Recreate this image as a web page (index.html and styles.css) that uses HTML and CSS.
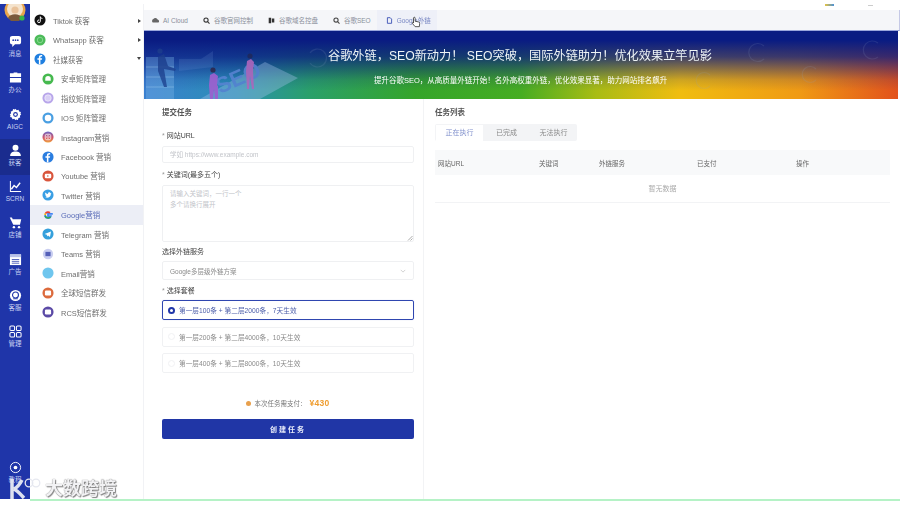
FILE: index.html
```html
<!DOCTYPE html>
<html lang="zh-CN">
<head>
<meta charset="utf-8">
<title>Google外链</title>
<link rel="stylesheet" href="styles.css">
</head>
<body>
<div class="page">
<div class="app">
  <nav class="rail">
    <div class="avatar"><svg viewBox="0 0 22 22" width="22" height="22"><circle cx="11" cy="9" r="10.500" fill="#e8a64c"/><circle cx="11" cy="8" r="8" fill="#f4e3cd"/><path d="M4 17c2-5 12-5 14 0l-3 3H7z" fill="#7a5a3c"/><circle cx="11" cy="9" r="3.600" fill="#e9c29a"/><circle cx="18" cy="17" r="2.600" fill="#39b54a"/></svg></div>
    <a class="rail-item"><svg viewBox="0 0 14 14" class="ri"><path d="M1 3.500C1 2 2 1.200 3.500 1.200h7C12 1.200 13 2 13 3.500v4.200c0 1.500-1 2.300-2.500 2.300H6.500L3.500 12.800V10C2 10 1 9.200 1 7.700z" fill="#fff"/><g fill="#2036a8"><circle cx="4.500" cy="5.600" r=".9"/><circle cx="7" cy="5.600" r=".9"/><circle cx="9.500" cy="5.600" r=".9"/></g></svg><span>消息</span></a>
    <a class="rail-item"><svg viewBox="0 0 14 14" class="ri"><path d="M5 2.500V1.500h4v1h4v4H1v-4zM1 7.500h12v5H1z" fill="#fff"/></svg><span>办公</span></a>
    <a class="rail-item"><svg viewBox="0 0 14 14" class="ri"><path d="M7 .8l1.300 1.500 2-.4.600 1.900 1.900.6-.4 2L13.200 7l-1.500 1.300.4 2-1.900.6-.6 1.900-2-.4L7 13.200l-1.300-1.500-2 .4-.6-1.900-1.900-.6.4-2L.8 7l1.500-1.300-.4-2 1.900-.6.600-1.900 2 .4z" fill="#fff"/><circle cx="7" cy="7" r="2.600" fill="#2036a8"/><circle cx="7" cy="7" r="1.300" fill="#fff"/></svg><span>AIGC</span></a>
    <a class="rail-item active"><svg viewBox="0 0 14 14" class="ri"><circle cx="7" cy="4" r="3.200" fill="#fff"/><path d="M1.200 13c0-3.500 2.500-5 5.800-5s5.800 1.500 5.800 5z" fill="#fff"/></svg><span>获客</span></a>
    <a class="rail-item"><svg viewBox="0 0 14 14" class="ri"><path d="M1.500 1v11.500H13" fill="none" stroke="#fff" stroke-width="1.100"/><path d="M2.500 10l3-4 2.500 2 4-5" fill="none" stroke="#fff" stroke-width="1.500"/></svg><span>SCRN</span></a>
    <a class="rail-item"><svg viewBox="0 0 14 14" class="ri"><path d="M.8 1.500h2.400l.8 2h9.200L11.800 9.500H4.600z" fill="#fff"/><circle cx="5.300" cy="12" r="1.300" fill="#fff"/><circle cx="10.800" cy="12" r="1.300" fill="#fff"/></svg><span>店铺</span></a>
    <a class="rail-item"><svg viewBox="0 0 14 14" class="ri"><rect x="1" y="1.500" width="12" height="11.500" fill="#fff"/><rect x="1" y="1.500" width="12" height="3" fill="#b9c2e8"/><path d="M3 7h8M3 9h8M3 11h8" stroke="#2036a8" stroke-width=".8"/></svg><span>广告</span></a>
    <a class="rail-item"><svg viewBox="0 0 14 14" class="ri"><circle cx="7" cy="7" r="6" fill="#fff"/><circle cx="7" cy="6.500" r="3.200" fill="none" stroke="#2036a8" stroke-width="1.200"/><path d="M4.500 10.500h5" stroke="#2036a8"/></svg><span>客服</span></a>
    <a class="rail-item"><svg viewBox="0 0 14 14" class="ri"><g fill="none" stroke="#fff" stroke-width="1.100"><rect x="1" y="1" width="5" height="5" rx="1.200"/><rect x="8" y="1" width="5" height="5" rx="1.200"/><rect x="1" y="8" width="5" height="5" rx="1.200"/><rect x="8" y="8" width="5" height="5" rx="1.200"/></g></svg><span>管理</span></a>
    <a class="rail-item rail-bottom"><svg viewBox="0 0 14 14" class="ri"><circle cx="7" cy="7" r="5.500" fill="none" stroke="#fff" stroke-width="1"/><circle cx="7" cy="7" r="2" fill="#fff"/></svg><span>教程</span></a>
  </nav>

  <aside class="menu">
    <a class="mi"><svg class="ic" viewBox="0 0 14 14"><circle cx="7" cy="7" r="6.500" fill="#111"/><path d="M7.400 3v5.500a1.600 1.600 0 1 1-1.400-1.600M7.400 3.200c.3 1.300 1.200 2 2.400 2.100" fill="none" stroke="#fff" stroke-width="1.100"/></svg><span>Tiktok 获客</span><i class="arrow right"></i></a>
    <a class="mi"><svg class="ic" viewBox="0 0 14 14"><circle cx="7" cy="7" r="6.500" fill="#4dbb5a"/><circle cx="7" cy="7" r="3.200" fill="none" stroke="#8fdc97" stroke-width="1"/></svg><span>Whatsapp 获客</span><i class="arrow right"></i></a>
    <a class="mi"><svg class="ic" viewBox="0 0 14 14"><circle cx="7" cy="7" r="6.500" fill="#1f7fe0"/><path d="M7.500 13V8H9.200l.3-1.900H7.500V5c0-.6.300-1 1-1h1V2.400c-2.200-.3-3.800.4-3.800 2.500v1.200H4V8h1.700v5z" fill="#fff"/></svg><span>社媒获客</span><i class="arrow down"></i></a>
    <a class="mi sub"><svg class="ic" viewBox="0 0 14 14"><circle cx="7" cy="7" r="6.500" fill="#46b94f"/><path d="M3.800 9V6.800a3.200 3.200 0 0 1 6.400 0V9z" fill="#fff"/></svg><span>安卓矩阵管理</span></a>
    <a class="mi sub"><svg class="ic" viewBox="0 0 14 14"><circle cx="7" cy="7" r="6.500" fill="#b8a6ea"/><circle cx="7" cy="7" r="3.800" fill="#d9cff5" stroke="#fff" stroke-width=".6"/></svg><span>指纹矩阵管理</span></a>
    <a class="mi sub"><svg class="ic" viewBox="0 0 14 14"><circle cx="7" cy="7" r="6.500" fill="#4a9fe2"/><circle cx="7" cy="7" r="3.800" fill="#fff"/></svg><span>IOS 矩阵管理</span></a>
    <a class="mi sub"><svg class="ic" viewBox="0 0 14 14"><defs><linearGradient id="ig" x1="0" y1="0" x2="0" y2="1"><stop offset="0" stop-color="#6a68c8"/><stop offset=".55" stop-color="#d2566a"/><stop offset="1" stop-color="#f0a23c"/></linearGradient></defs><circle cx="7" cy="7" r="6.500" fill="url(#ig)"/><rect x="3.800" y="3.800" width="6.400" height="6.400" rx="1.800" fill="none" stroke="#fff" stroke-width=".9"/><circle cx="7" cy="7" r="1.500" fill="none" stroke="#fff" stroke-width=".8"/></svg><span>Instagram营销</span></a>
    <a class="mi sub"><svg class="ic" viewBox="0 0 14 14"><circle cx="7" cy="7" r="6.500" fill="#2a7de0"/><path d="M7.500 13V8H9.200l.3-1.900H7.500V5c0-.6.300-1 1-1h1V2.400c-2.200-.3-3.800.4-3.800 2.500v1.200H4V8h1.700v5z" fill="#fff"/></svg><span>Facebook 营销</span></a>
    <a class="mi sub"><svg class="ic" viewBox="0 0 14 14"><circle cx="7" cy="7" r="6.500" fill="#d9553c"/><rect x="3.200" y="4.500" width="7.600" height="5" rx="1.400" fill="#fff"/><path d="M6.200 5.800v2.400L8.200 7z" fill="#d9553c"/></svg><span>Youtube 营销</span></a>
    <a class="mi sub"><svg class="ic" viewBox="0 0 14 14"><circle cx="7" cy="7" r="6.500" fill="#3a9fe4"/><path d="M3.400 9.800c3.500 1.500 7-.5 7-4.200l.7-.8-.9.2-.6-.7C8.400 3.300 6.800 4.200 7 5.700 5.700 5.700 4.600 5 3.800 4.200c-.4 1 0 1.900.6 2.400l-.7-.2c0 .9.500 1.500 1.300 1.800H4.300c.2.600.7 1 1.400 1-.7.500-1.500.7-2.300.6z" fill="#fff"/></svg><span>Twitter 营销</span></a>
    <a class="mi sub current"><svg class="ic" viewBox="0 0 14 14"><path d="M12.600 5.800H7v2.500h3.200A3.400 3.400 0 0 1 3.600 7" fill="none" stroke="#4285f4" stroke-width="2"/><path d="M3.700 8c.5 1.500 1.800 2.500 3.300 2.500s2.500-.6 3.200-1.600" fill="none" stroke="#34a853" stroke-width="2"/><path d="M3.600 7c0-.7.200-1.300.5-1.800" fill="none" stroke="#fbbc05" stroke-width="2"/><path d="M4.100 5.200A3.500 3.500 0 0 1 9.300 4.400" fill="none" stroke="#ea4335" stroke-width="2"/></svg><span>Google营销</span></a>
    <a class="mi sub"><svg class="ic" viewBox="0 0 14 14"><circle cx="7" cy="7" r="6.500" fill="#35a0dc"/><path d="M3 7l7.500-3-1.200 6.500-2.300-1.700-1.100 1.100-.2-2z" fill="#fff"/></svg><span>Telegram 营销</span></a>
    <a class="mi sub"><svg class="ic" viewBox="0 0 14 14"><circle cx="7" cy="7" r="6" fill="#c8cdf0"/><rect x="4" y="4.500" width="6" height="5" fill="#5560b8"/></svg><span>Teams 营销</span></a>
    <a class="mi sub"><svg class="ic" viewBox="0 0 14 14"><circle cx="7" cy="7" r="6.500" fill="#6fc6ee"/></svg><span>Email营销</span></a>
    <a class="mi sub"><svg class="ic" viewBox="0 0 14 14"><circle cx="7" cy="7" r="6.500" fill="#dc6a3c"/><rect x="3.400" y="4.200" width="7.200" height="5.600" rx="1.400" fill="#fff"/></svg><span>全球短信群发</span></a>
    <a class="mi sub"><svg class="ic" viewBox="0 0 14 14"><circle cx="7" cy="7" r="6.500" fill="#5b4aa6"/><rect x="3.400" y="4.200" width="7.200" height="5.600" rx="1.400" fill="#fff"/></svg><span>RCS短信群发</span></a>
  </aside>

  <main class="main">
    <div class="topstrip"><i class="dot-a"></i><i class="dot-b"></i></div>
    <div class="tabs">
      <a class="tab"><svg viewBox="0 0 10 10" class="ti"><path d="M1 8a3 3 0 0 1 1-5 3.500 3.500 0 0 1 6 .5A2.500 2.500 0 0 1 9 8z" fill="#666"/></svg>AI Cloud</a>
      <a class="tab"><svg viewBox="0 0 10 10" class="ti"><circle cx="4.300" cy="4.300" r="3" fill="none" stroke="#333" stroke-width="1.500"/><path d="M6.500 6.500L9.300 9.300" stroke="#333" stroke-width="1.500"/></svg>谷歌官网控制</a>
      <a class="tab"><svg viewBox="0 0 10 10" class="ti"><path d="M1 1h3.500v8H1zM5.500 2h3.500v6H5.500z" fill="#333"/></svg>谷歌域名控盘</a>
      <a class="tab"><svg viewBox="0 0 10 10" class="ti"><circle cx="4.300" cy="4.300" r="3" fill="none" stroke="#444" stroke-width="1.500"/><path d="M6.500 6.500L9.300 9.300" stroke="#444" stroke-width="1.500"/></svg>谷歌SEO</a>
      <a class="tab on"><svg viewBox="0 0 10 10" class="ti"><path d="M2 1h4l2 2v6H2z" fill="none" stroke="#2f46b0" stroke-width="1.200"/></svg>Google外链</a>
    </div>
    <section class="banner">
      <svg class="art" viewBox="0 0 754 68" width="754" height="68">
        <path d="M2 26h28v42H2z" fill="#7fb8e8" opacity=".4"/>
        <g fill="none" stroke="#bcdcf4" stroke-width=".8" opacity=".5"><path d="M2 36h28M2 46h28M2 56h28"/></g>
        <path d="M14 26l6-3 4 12 8 3-1 2-11-2 3 18h-3l-6-16z" fill="#1e3f8c" opacity=".85"/>
        <circle cx="16" cy="20" r="2.600" fill="#1e3f8c" opacity=".85"/>
        <path d="M35 28h22l12-8v16l-34 4z" fill="#8fb4ea" opacity=".16"/>
        <path d="M56 68L121 31 154 47 116 68z" fill="#a8c4ec" opacity=".42"/>
        <text x="76" y="63" class="art-seo" transform="rotate(-24 76 63)">SEO</text>
        <path d="M66 44l4-2 4 3-1 9 1 1v13h-3l-1-10-1 10h-3l-1-14z" fill="#a85ed2"/>
        <circle cx="69" cy="39" r="2.600" fill="#2e2448"/>
        <path d="M103 30l4-2 3 3-1 9 1 18h-2l-2-13-1 13h-2l-1-18z" fill="#b868c0"/>
        <circle cx="106" cy="25" r="2.600" fill="#20285a"/>
        <g fill="none" stroke="#8fa0c0" stroke-width="1.200" opacity=".18">
          <path d="M166 22a9 9 0 1 1 0 10"/>
          <path d="M620 15a9 9 0 1 0 0 13"/>
          <path d="M734 12a9 9 0 1 0 0 14"/>
          <path d="M672 38a8 8 0 1 0 0 11"/>
          <path d="M566 44a8 8 0 1 0 0 11"/>
        </g>
      </svg>
      <div class="banner-copy">
        <h1>谷歌外链，SEO新动力！ SEO突破，国际外链助力！优化效果立竿见影</h1>
        <p>提升谷歌SEO，从高质量外链开始！名外高权重外链，优化效果显著，助力网站排名飙升</p>
      </div>
    </section>
    <div class="panels">
      <form class="form">
        <h2>提交任务</h2>
        <label class="lb first"><b>*</b> 网站URL</label>
        <div class="field one ph">学如 https://www.example.com</div>
        <label class="lb kw"><b>*</b> 关键词(最多五个)</label>
        <div class="field area ph">请输入关键词，一行一个<br>多个请换行展开<svg class="grip" viewBox="0 0 6 6" width="6" height="6"><path d="M5.500 1L1 5.500M5.500 3.500L3.500 5.500" stroke="#888" stroke-width=".7"/></svg></div>
        <label class="lb svc">选择外链服务</label>
        <div class="field sel"><span>Google多层级外链方案</span><svg viewBox="0 0 8 5" width="6" height="4"><path d="M1 1l3 3 3-3" fill="none" stroke="#c4c4c4"/></svg></div>
        <label class="lb pk"><b>*</b> 选择套餐</label>
        <div class="opt picked"><i class="radio"></i>第一层100条 + 第二层2000条，7天生效</div>
        <div class="opt"><i class="radio"></i>第一层200条 + 第二层4000条，10天生效</div>
        <div class="opt"><i class="radio"></i>第一层400条 + 第二层8000条，10天生效</div>
        <div class="price"><i class="coin"></i><span>本次任务需支付：</span><strong>¥430</strong></div>
        <button class="submit" type="button">创建任务</button>
      </form>
      <section class="list">
        <h2>任务列表</h2>
        <div class="seg"><a class="on">正在执行</a><a>已完成</a><a>无法执行</a></div>
        <div class="thead"><span>网站URL</span><span>关键词</span><span>外链服务</span><span>已支付</span><span>操作</span></div>
        <div class="empty">暂无数据</div>
      </section>
    </div>
  </main>
</div>
<div class="greenline"></div>
<svg class="cursor" viewBox="0 0 12 15" width="10" height="13"><path d="M4 1.200c.8 0 1 .5 1 1.200V6l4 .8c1 .2 1.500.8 1.400 1.700L10 12.500H5L1.800 8.800c-.7-1 .5-1.800 1.300-1L3 8V2.400c0-.7.300-1.200 1-1.200z" fill="#fff" stroke="#222" stroke-width=".9"/></svg>
<div class="mark"><svg viewBox="0 0 33 22" width="33" height="22"><path d="M4 1v20M6 11c4-2 6-5 8-9M6 11c4 2 7 6 10 9" fill="none" stroke="#dde1f0" stroke-width="3.500"/><circle cx="21" cy="5" r="3.800" fill="none" stroke="#e6e8f0" stroke-width="1.300"/><circle cx="28" cy="5" r="3.800" fill="none" stroke="#e6e8f0" stroke-width="1.300"/></svg><span>大数跨境</span></div>
</div>
</body>
</html>
```
FILE: styles.css
```css
* { box-sizing: border-box; }
html, body { margin: 0; height: 506px; overflow: hidden; background: #fff; }
body { font-family: "Liberation Sans", "Noto Sans CJK SC", sans-serif; font-size: 7px; color: #666; }
a { display: block; }
h1, h2, p { margin: 0; }

.page { position: relative; width: 900px; height: 506px; padding-top: 4px; filter: blur(.5px); overflow: hidden; }
.app { display: flex; height: 495px; }

/* icon rail */
.rail { width: 30px; flex: none; background: #1f35a9; display: flex; flex-direction: column; align-items: stretch; overflow: hidden; color: #c7d0f2; }
.avatar { height: 26px; margin-top: -3px; padding-left: 4px; flex: none; box-sizing: content-box; padding-bottom: 3px; }
.rail-item { height: 36.300px; flex: none; display: flex; flex-direction: column; align-items: center; padding-top: 5px; gap: 2px; font-size: 6.500px; line-height: 8px; }
.rail-item.active { background: #1a2c8e; }
.ri { width: 13px; height: 13px; flex: none; }
.rail-bottom { margin-top: auto; height: 38px; padding-top: 0; }

/* second-level menu */
.menu { width: 114px; flex: none; padding-top: 6.500px; display: flex; flex-direction: column; font-size: 7.500px; color: #6f6f6f; border-right: 1px solid #f1f2f5; }
.mi { height: 19.470px; flex: none; display: flex; align-items: center; padding-left: 4px; gap: 7px; position: relative; }
.mi.sub { padding-left: 12px; }
.mi.current { background: #eceef6; color: #5a6cb8; }
.ic { width: 12px; height: 12px; flex: none; }
.arrow { position: absolute; right: 2px; top: 8px; width: 0; height: 0; border-style: solid; }
.arrow.right { border-width: 2px 0 2px 3px; border-color: transparent transparent transparent #444; }
.arrow.down { border-width: 3px 2px 0 2px; border-color: #444 transparent transparent transparent; }

/* main area */
.main { flex: 1; min-width: 0; display: flex; flex-direction: column; padding-right: 2px; }
.topstrip { height: 6px; flex: none; position: relative; }
.dot-a { position: absolute; left: 681px; top: 0; width: 9px; height: 2px; background: linear-gradient(90deg, #e8c440, #4a90d8); }
.dot-b { position: absolute; left: 724px; top: 1px; width: 5px; height: 1px; background: #ccc; }
.tabs { height: 21px; flex: none; margin-right: -2px; display: flex; align-items: stretch; background: #f5f6f9; padding-left: 8px; border-bottom: 1px solid #9aa6dc; border-right: 1px solid #c5c9e6; color: #8a8f9a; font-size: 6.500px; }
.tab { display: flex; align-items: center; gap: 4px; margin-right: 15px; white-space: nowrap; }
.tab.on { background: #eef0f8; color: #7a88c4; padding: 0 6px 0 9px; margin-left: -9px; }
.ti { width: 7px; height: 7px; flex: none; }

/* banner */
.banner { height: 68px; flex: none; position: relative; display: flex; justify-content: flex-start;
  background:
    linear-gradient(180deg, #0a1c82 0%, #0a1c82 14%, rgba(10,28,130,.78) 38%, rgba(10,28,130,.15) 72%, rgba(10,28,130,0) 88%),
    linear-gradient(90deg, #3b80d0 0%, #2a8fb5 12%, #2aa06a 22%, #35a52a 36%, #46ad22 50%, #a9bc14 60%, #f0bd10 71%, #f09a14 87%, #e2521c 100%);
}
.art { position: absolute; left: 0; top: 0; opacity: .85; }
.art-seo { font: bold 22px "Liberation Sans", sans-serif; fill: #5a84d4; }
.banner-copy { margin-left: 184px; display: flex; flex-direction: column; color: #fff; position: relative; }
.banner-copy h1 { font-size: 12.200px; font-weight: 400; line-height: 20px; margin-top: 15px; white-space: nowrap; color: #eef4f6; }
.banner-copy p { font-size: 7.500px; line-height: 10px; margin-top: 10px; margin-left: 46px; white-space: nowrap; }

/* panels */
.panels { flex: 1; display: flex; min-height: 0; }
.form { width: 280px; flex: none; display: flex; flex-direction: column; padding: 9px 9px 0 18px; border-right: 1px solid #f2f3f5; }
h2 { font-size: 7.500px; line-height: 10px; font-weight: 700; color: #555; }
.lb { display: block; line-height: 9px; font-size: 7px; color: #444; }
.lb b { color: #999; font-weight: 400; }
.lb.first { margin-top: 13px; margin-bottom: 6px; }
.lb.kw { margin-top: 7px; }
.field { border: 1px solid #eff0f2; border-radius: 2px; background: #fff; font-size: 6.500px; }
.field.one { height: 17px; padding-left: 7px; line-height: 15px; }
.ph { color: #c2c4c9; }
.field.area { height: 57px; margin-top: 6px; padding: 3px 7px; line-height: 10.500px; position: relative; }
.grip { position: absolute; right: 0; bottom: 0; }
.lb.svc { margin-top: 5px; }
.field.sel { height: 19px; margin-top: 5px; flex: none; display: flex; align-items: center; justify-content: space-between; padding: 0 7px; color: #8a8a8a; }
.lb.pk { margin-top: 6px; margin-bottom: 5px; }
.opt { height: 20px; flex: none; margin-bottom: 6.500px; border: 1px solid #f0f1f3; border-radius: 2px; display: flex; align-items: center; padding-left: 5px; gap: 4px; color: #8a8a8a; font-size: 6.700px; }
.opt.picked { border-color: #2f46b0; color: #4a5ca8; box-shadow: 0 0 1px #b8c2ea; }
.radio { width: 7px; height: 7px; border-radius: 50%; border: 1px solid #f0f1f3; flex: none; background: #fff; }
.picked .radio { border: 2px solid #2036a8; }
.price { margin-top: 17.500px; flex: none; display: flex; align-items: center; justify-content: center; gap: 3px; height: 12px; font-size: 6.500px; color: #777; }
.coin { width: 5px; height: 5px; border-radius: 50%; background: #e8a04c; }
.price strong { font-size: 8.500px; color: #ef9d2f; font-weight: 700; letter-spacing: .3px; }
.submit { margin-top: 10px; height: 19.500px; flex: none; border: 0; border-radius: 2px; background: #2036a6; color: #e8ecfa; font: 700 7px "Liberation Sans", "Noto Sans CJK SC", sans-serif; letter-spacing: 2px; }

.list { flex: 1; min-width: 0; padding: 9px 8px 0 11px; display: flex; flex-direction: column; }
.seg { margin-top: 6px; width: 142px; height: 17px; background: #f3f4f6; border-radius: 2px; display: flex; padding: 1px 0 0 1px; color: #8a8a8a; flex: none; }
.seg a { width: 47px; text-align: center; line-height: 16px; }
.seg a.on { background: #fff; color: #8090cc; }
.thead { margin-top: 9px; height: 25px; flex: none; background: #f8f9fa; display: grid; grid-template-columns: 101px 60px 98px 99px 1fr; align-items: center; padding-left: 3px; color: #666; font-size: 6.500px; }
.empty { height: 28px; flex: none; line-height: 28px; text-align: center; border-bottom: 1px solid #f2f3f5; color: #aaa; }

.greenline { height: 1.500px; margin: 0 0 0 30px; background: #b5f2c6; }
.cursor { position: absolute; left: 411px; top: 16px; }
.mark { position: absolute; left: 8px; top: 478px; display: flex; align-items: center; gap: 4px; color: #f2f2f4; font-size: 18px; font-weight: 700; line-height: 22px; text-shadow: 0 0 1px #555, 1px 1px 1px #888; }
```
